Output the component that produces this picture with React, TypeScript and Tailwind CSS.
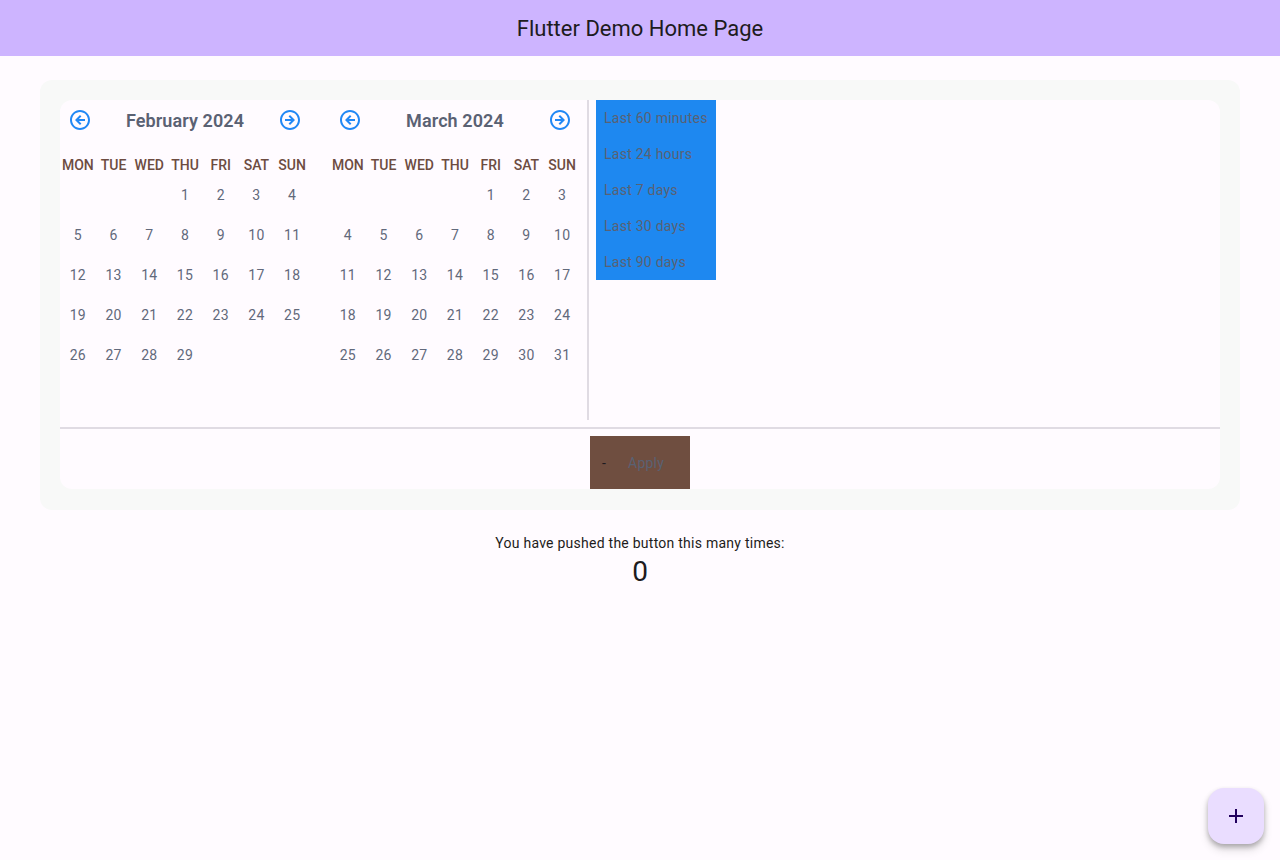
import { MdAdd } from "react-icons/md";

const weekdays = ["MON", "TUE", "WED", "THU", "FRI", "SAT", "SUN"];
const presets = ["Last 60 minutes", "Last 24 hours", "Last 7 days", "Last 30 days", "Last 90 days"];

function ArrowLeftIcon() {
    return (
        <svg width="24" height="24" viewBox="0 0 24 24" fill="#2188f5">
            <path d="M2 12c0 5.52 4.48 10 10 10s10-4.48 10-10S17.52 2 12 2 2 6.48 2 12zm18 0c0 4.42-3.58 8-8 8s-8-3.58-8-8 3.58-8 8-8 8 3.58 8 8zM7 12l5-5 1.41 1.41L10.83 11H17v2h-6.17l2.58 2.59L12 17l-5-5z" />
        </svg>
    );
}

function ArrowRightIcon() {
    return (
        <svg width="24" height="24" viewBox="0 0 24 24" fill="#2188f5" className="-scale-x-100">
            <path d="M2 12c0 5.52 4.48 10 10 10s10-4.48 10-10S17.52 2 12 2 2 6.48 2 12zm18 0c0 4.42-3.58 8-8 8s-8-3.58-8-8 3.58-8 8-8 8 3.58 8 8zM7 12l5-5 1.41 1.41L10.83 11H17v2h-6.17l2.58 2.59L12 17l-5-5z" />
        </svg>
    );
}

function MonthGrid({ title, offset, days }: { title: string; offset: number; days: number }) {
    const cells = [...Array(offset).fill(null), ...Array.from({ length: days }, (_, i) => i + 1)];

    return (
        <div className="w-[250px] shrink-0">
            <div className="flex h-10 items-center justify-between px-2">
                <ArrowLeftIcon />
                <span className="text-[18px] font-semibold tracking-[0.1px] text-[#5a6173]">{title}</span>
                <ArrowRightIcon />
            </div>
            <div className="grid grid-cols-7 pt-[15px]">
                {weekdays.map((d) => (
                    <div key={d} className="flex h-5 items-center justify-center text-[14px] font-medium text-[#6d4c41]">
                        {d}
                    </div>
                ))}
            </div>
            <div className="grid grid-cols-7">
                {cells.map((d, i) => (
                    <div key={i} className="flex h-10 items-center justify-center text-[14px] tracking-[0.25px] text-[#62697b]">
                        {d}
                    </div>
                ))}
            </div>
        </div>
    );
}

export default function App() {
    return (
        <div className="relative min-h-[860px] bg-[#fffbff] font-['Roboto',sans-serif] text-[#1d1b20]">
            <header className="flex h-14 items-center justify-center bg-[#cdb4ff] text-[22px]">
                Flutter Demo Home Page
            </header>

            <main className="px-10 pt-6">
                <div className="rounded-xl bg-[#f8f9f8] p-5 pb-[21px]">
                    <div className="overflow-hidden rounded-xl bg-[#fffbff]">
                        <div className="flex h-80">
                            <div className="flex w-[527px] shrink-0 gap-5">
                                <MonthGrid title="February 2024" offset={3} days={29} />
                                <MonthGrid title="March 2024" offset={4} days={31} />
                            </div>
                            <div className="w-0.5 bg-[#e0dbe3]" />
                            <div className="ml-[7px] h-[180px] w-[120px] bg-[#1e88f0]">
                                {presets.map((p) => (
                                    <div key={p} className="flex h-9 items-center whitespace-nowrap pl-2 text-[14px] tracking-[0.25px] text-[#5a6173]">
                                        {p}
                                    </div>
                                ))}
                            </div>
                        </div>
                        <div className="mt-[7px] h-0.5 bg-[#e0dbe3]" />
                        <div className="mt-[7px] flex justify-center">
                            <div className="flex h-[53px] w-[100px] items-center bg-[#6f4e40] pl-3 pt-0.5 text-[14px] tracking-[0.2px]">
                                <span className="text-[#1d1b20]">-</span>
                                <span className="ml-[22px] text-[#5a6173]">Apply</span>
                            </div>
                        </div>
                    </div>
                </div>

                <div className="flex flex-col items-center pt-[23px]">
                    <p className="text-[14px] leading-5 tracking-[0.25px]">You have pushed the button this many times:</p>
                    <p className="mt-px text-[28px] leading-9">0</p>
                </div>
            </main>

            <button className="absolute left-[1208px] top-[788px] flex h-14 w-14 items-center justify-center rounded-2xl bg-[#eaddff] text-[#21005d] shadow-[0_3px_5px_rgba(0,0,0,0.25),0_6px_10px_rgba(0,0,0,0.12)]">
                <MdAdd className="text-[24px]" />
            </button>
        </div>
    );
}
